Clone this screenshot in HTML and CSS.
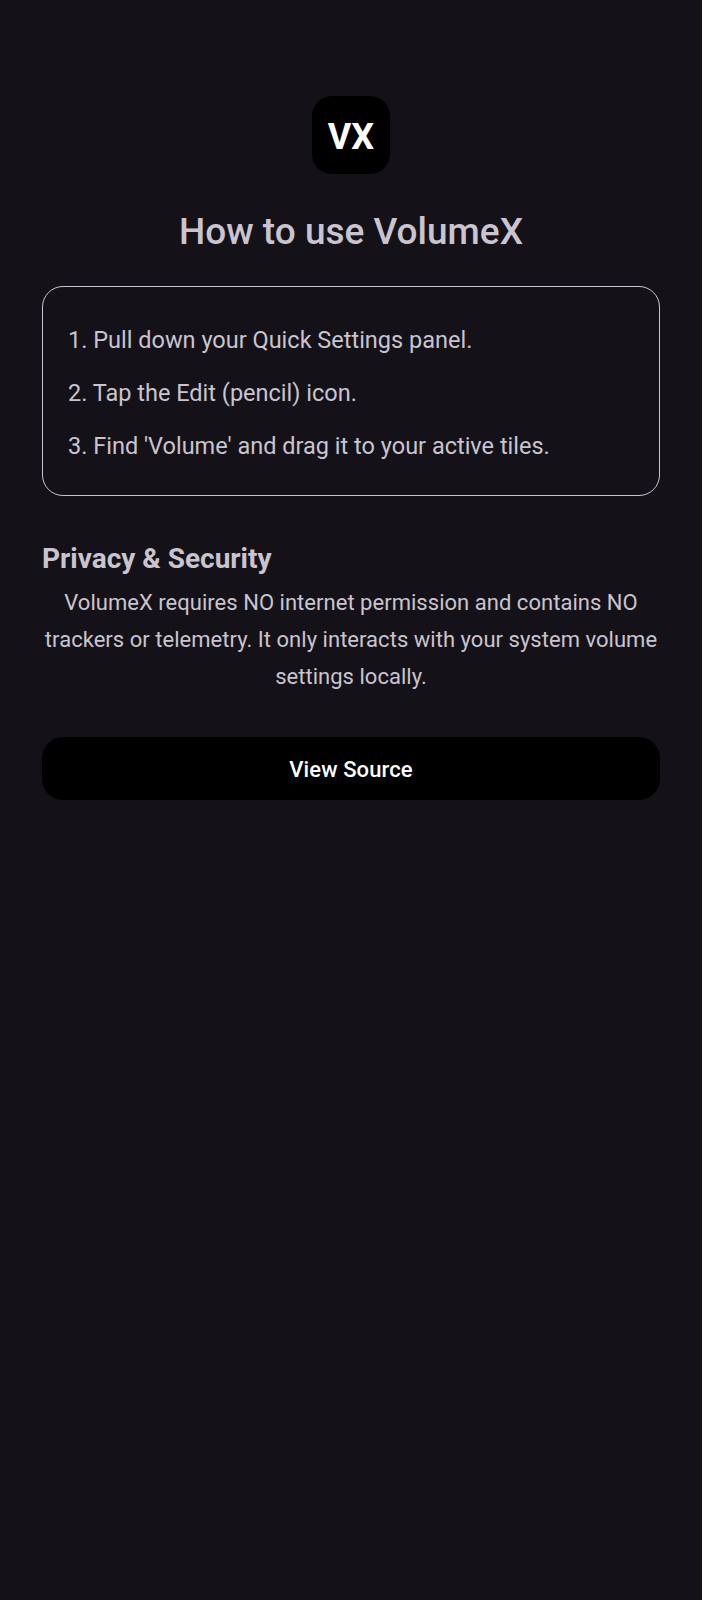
FILE: index.html
```html
<!DOCTYPE html>
<html>

<head>
    <title>How to use VolumeX</title>
    <meta charset="utf-8" />
    <link rel="stylesheet" href="styles.css">
</head>

<body>
    <div class="page">
        <div class="logo">VX</div>
        <h1 class="title">How to use VolumeX</h1>

        <div class="steps">
            <p class="step">1. Pull down your Quick Settings panel.</p>
            <p class="step">2. Tap the Edit (pencil) icon.</p>
            <p class="step">3. Find 'Volume' and drag it to your active tiles.</p>
        </div>

        <h2 class="section-title">Privacy &amp; Security</h2>
        <p class="section-text">VolumeX requires NO internet permission and contains NO trackers or telemetry. It only interacts with your system volume settings locally.</p>

        <button class="source-btn" type="button">View Source</button>
    </div>
</body>

</html>
```

FILE: styles.css
```css
body {
    margin: 0;
    padding: 0;
    background-color: #141218;
    font-family: Roboto, "Liberation Sans", sans-serif;
    color: #cac4d0;
}

.page {
    height: 1600px;
    box-sizing: border-box;
    padding: 96px 42px 0;
    display: flex;
    flex-direction: column;
    align-items: center;
}

.logo {
    width: 78px;
    height: 78px;
    box-sizing: border-box;
    padding-top: 3px;
    border-radius: 20px;
    background-color: #000;
    color: #fff;
    font-size: 36px;
    font-weight: 700;
    display: flex;
    align-items: center;
    justify-content: center;
}

.title {
    margin: 36px 0 0;
    font-size: 37px;
    line-height: 44px;
    font-weight: 500;
    color: #cac4d0;
}

.steps {
    width: 100%;
    box-sizing: border-box;
    margin-top: 32px;
    padding: 27px 25px 22px;
    border: 1px solid #cac4d0;
    border-radius: 21px;
}

.step {
    margin: 0;
    font-size: 23.5px;
    line-height: 53px;
}

.section-title {
    align-self: flex-start;
    margin: 45px 0 0;
    font-size: 28px;
    line-height: 36px;
    font-weight: 700;
}

.section-text {
    margin: 7px 0 0;
    font-size: 22px;
    line-height: 37px;
    letter-spacing: 0.03px;
    text-align: center;
}

.source-btn {
    width: 100%;
    height: 63px;
    margin-top: 42px;
    padding-top: 3px;
    border: none;
    border-radius: 21px;
    background-color: #000;
    color: #fff;
    font-family: inherit;
    font-size: 22px;
    font-weight: 500;
    letter-spacing: 0.1px;
}
```
